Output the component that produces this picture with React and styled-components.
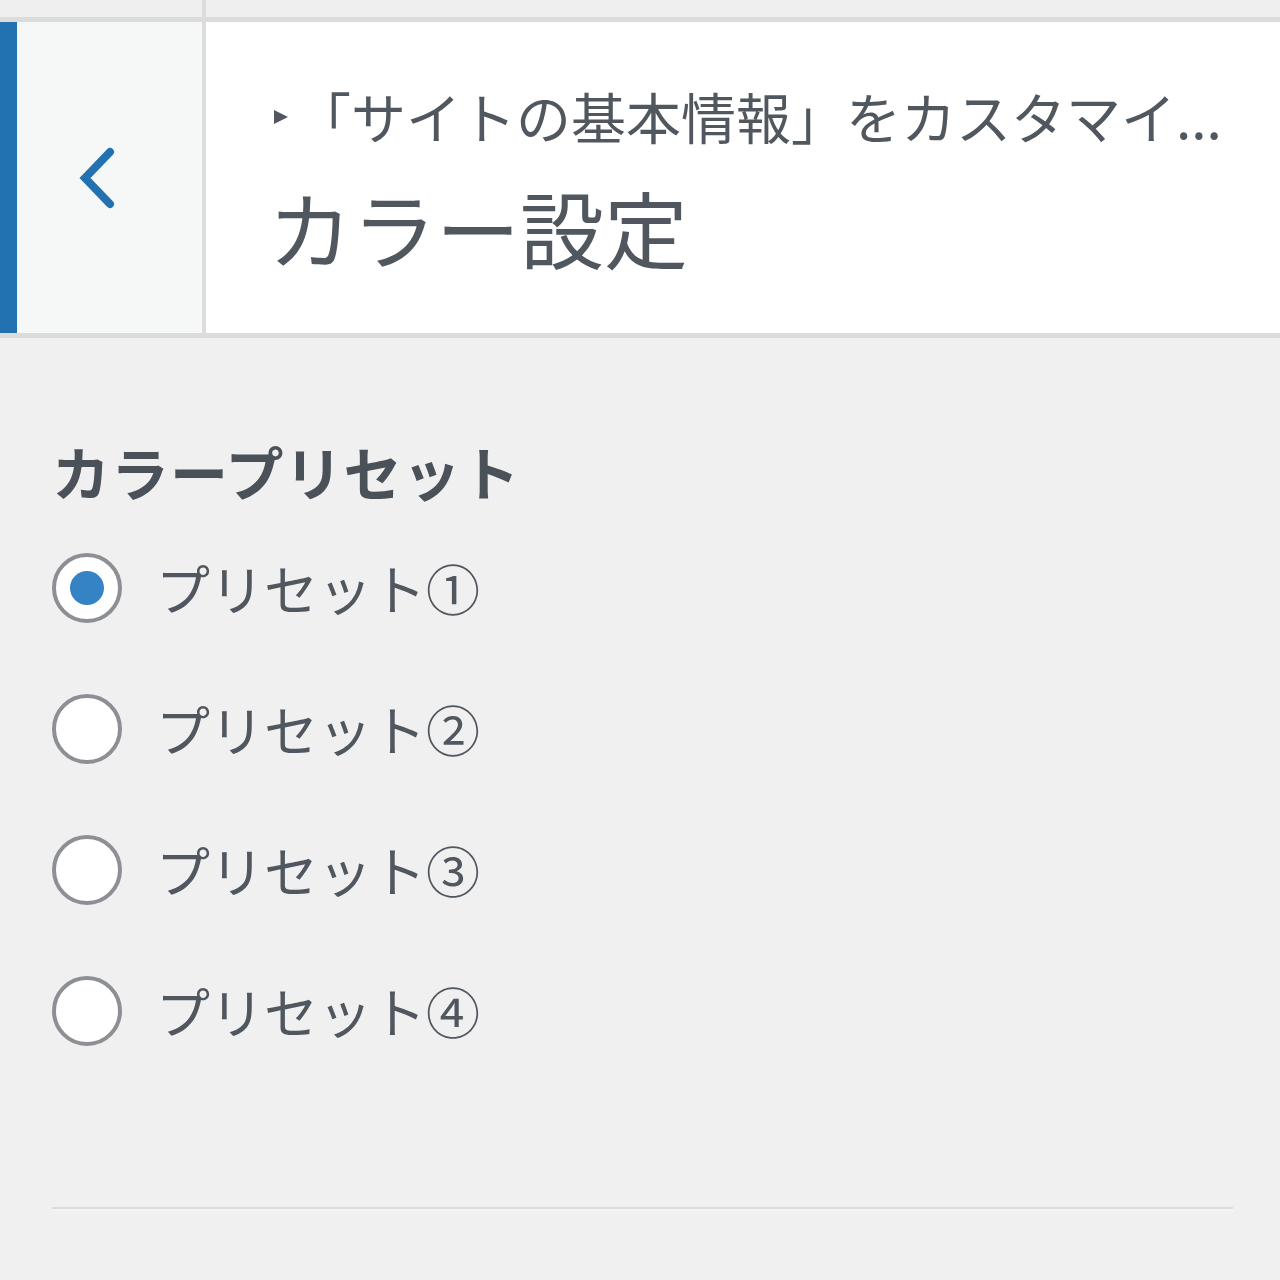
import { useState } from "react";
import styled, { createGlobalStyle } from "styled-components";

const GlobalStyle = createGlobalStyle`
  html, body {
    margin: 0;
    padding: 0;
    background: #f0f0f1;
    font-family: "Noto Sans CJK JP", "Noto Sans", sans-serif;
    color: #50575e;
  }
  * {
    box-sizing: border-box;
  }
`;

const Panel = styled.div`
  width: 1280px;
  min-height: 1280px;
  background: #f0f0f1;
  overflow: hidden;
`;

const TopStrip = styled.div`
  display: flex;
  height: 22px;
  border-bottom: 5px solid #dcdcde;
  background: #efeff0;
`;

const TopCell = styled.div`
  width: 206px;
  border-right: 4px solid #dcdcde;
`;

const Header = styled.div`
  display: flex;
  height: 316px;
  background: #fff;
  border-bottom: 5px solid #dcdcde;
`;

const BackButton = styled.button`
  width: 206px;
  flex-shrink: 0;
  border: none;
  border-left: 17px solid #2271b1;
  border-right: 4px solid #dcdcde;
  background: #f6f7f7;
  display: flex;
  align-items: center;
  justify-content: center;
  padding: 0 24px 0 0;
  cursor: pointer;
`;

const Titles = styled.div`
  flex: 1;
  min-width: 0;
  padding: 63px 40px 0 66px;
  display: flex;
  flex-direction: column;
`;

const Crumb = styled.div`
  display: flex;
  align-items: center;
  height: 60px;
`;

const Triangle = styled.span`
  flex-shrink: 0;
  width: 0;
  height: 0;
  border-top: 7px solid transparent;
  border-bottom: 7px solid transparent;
  border-left: 14px solid #50575e;
  margin: 4px 8px 0 2px;
`;

const CrumbText = styled.span`
  font-size: 55px;
  line-height: 60px;
  white-space: nowrap;
  color: #50575e;
`;

const Title = styled.h1`
  margin: 32px 0 0;
  font-size: 84px;
  line-height: 100px;
  font-weight: 400;
  color: #50575e;
  white-space: nowrap;
  margin-left: -4px;
`;

const Section = styled.div`
  padding: 98px 47px 0 52px;
`;

const SectionTitle = styled.div`
  font-size: 58px;
  line-height: 70px;
  font-weight: 700;
  color: #4b5158;
  letter-spacing: 1px;
`;

const List = styled.div`
  display: flex;
  flex-direction: column;
  margin-top: 11px;
`;

const Option = styled.label`
  display: flex;
  align-items: center;
  height: 141px;
  cursor: pointer;
`;

const Radio = styled.input`
  appearance: none;
  margin: 0 34px 0 0;
  width: 70px;
  height: 70px;
  border: 4px solid #8c8f94;
  border-radius: 50%;
  background: #fff;
  display: flex;
  align-items: center;
  justify-content: center;
  flex-shrink: 0;
  cursor: pointer;

  &:checked::before {
    content: "";
    width: 34px;
    height: 34px;
    border-radius: 50%;
    background: #3582c4;
  }
`;

const OptionText = styled.span`
  font-size: 54px;
  line-height: 70px;
  color: #50575e;
`;

const Divider = styled.hr`
  margin: 126px 0 0;
  border: none;
  border-top: 2px solid #dcdcde;
  border-bottom: 2px solid #f3f4f4;
`;

const presets = ["プリセット①", "プリセット②", "プリセット③", "プリセット④"];

const App = () => {
  const [selected, setSelected] = useState(0);

  return (
    <Panel>
      <GlobalStyle />
      <TopStrip>
        <TopCell />
      </TopStrip>
      <Header>
        <BackButton aria-label="戻る">
          <svg width="44" height="72" viewBox="0 0 44 72">
            <polyline
              points="34,10 9,36 34,62"
              fill="none"
              stroke="#2271b1"
              strokeWidth="8"
              strokeLinecap="round"
              strokeLinejoin="miter"
            />
          </svg>
        </BackButton>
        <Titles>
          <Crumb>
            <Triangle />
            <CrumbText>「サイトの基本情報」をカスタマイ...</CrumbText>
          </Crumb>
          <Title>カラー設定</Title>
        </Titles>
      </Header>
      <Section>
        <SectionTitle>カラープリセット</SectionTitle>
        <List>
          {presets.map((p, i) => (
            <Option key={p}>
              <Radio
                type="radio"
                name="preset"
                checked={selected === i}
                onChange={() => setSelected(i)}
              />
              <OptionText>{p}</OptionText>
            </Option>
          ))}
        </List>
        <Divider />
      </Section>
    </Panel>
  );
};

export default App;
